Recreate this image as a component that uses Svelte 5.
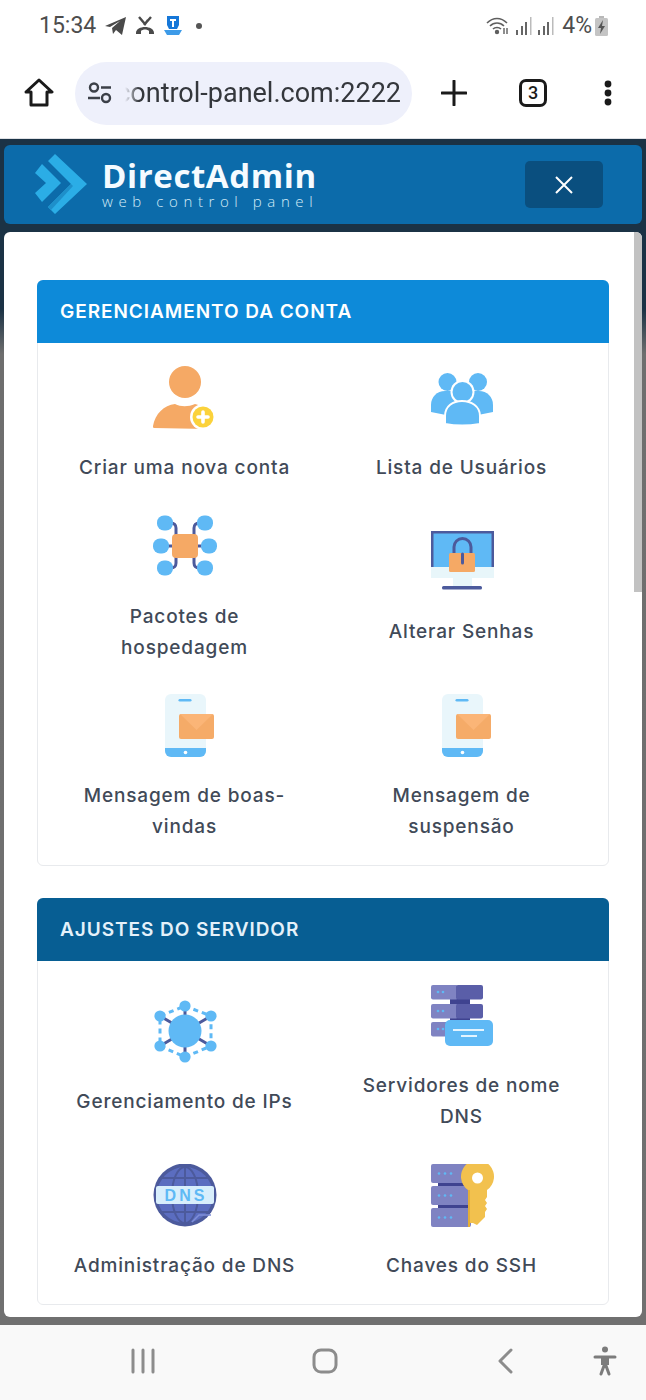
<script>
  const sections = [
    { title: 'GERENCIAMENTO DA CONTA', tone: 'bright', items: [
      { icon: 'user', label: 'Criar uma nova conta' },
      { icon: 'users', label: 'Lista de Usuários' },
      { icon: 'nodes', label: 'Pacotes de hospedagem' },
      { icon: 'monitor', label: 'Alterar Senhas' },
      { icon: 'phone', label: 'Mensagem de boas-vindas' },
      { icon: 'phone', label: 'Mensagem de suspensão' }
    ]},
    { title: 'AJUSTES DO SERVIDOR', tone: 'deep', items: [
      { icon: 'ip', label: 'Gerenciamento de IPs' },
      { icon: 'servers', label: 'Servidores de nome DNS' },
      { icon: 'globe', label: 'Administração de DNS' },
      { icon: 'key', label: 'Chaves do SSH' }
    ]}
  ];
  const blue = '#5fb9f5', navy = '#4c5a9c', orange = '#f5a965', lilac = '#7f83c2', violet = '#5a5ea8';
  const ipNodes = [[32,6],[58,16],[58,46],[32,57],[7,46],[7,16]];
  const tree = [[12,8],[52,8],[8,31],[56,31],[12,53],[52,53]];
</script>

<div class="screen">
  <div class="status">
    <span class="time">15:34</span>
    <svg class="s-icon" width="22" height="20" viewBox="0 0 22 20"><path d="M0 10 21 1 17 19 11 14 8 18 7 12 15 5 5 11z" fill="#4a4a4a"/></svg>
    <svg class="s-icon" width="20" height="20" viewBox="0 0 20 20" fill="none" stroke="#4a4a4a"><path d="M4 1 10 8 13 4M16 1 9 9" stroke-width="2.4"/><path d="M1 17c0-8 18-8 18 0v1h-5v-3c-2-2-6-2-8 0v3H1z" fill="#4a4a4a" stroke="none"/></svg>
    <svg class="s-icon" width="20" height="22" viewBox="0 0 20 22"><path d="M4 1h12v9l-2 4H6l-2-4z" fill="#1677d8"/><path d="M7 4h6v2h-2v6H9V6H7z" fill="#fff"/><path d="M1 15h18l-3 5H4z" fill="#3d9be8"/></svg>
    <span class="dot"></span>
    <span class="spacer"></span>
    <svg width="24" height="20" viewBox="0 0 24 20" fill="none" stroke="#5f5f5f" stroke-width="1.6"><path d="M1 7c6-6 14-6 20 0M4 10c4-4 10-4 14 0M7 13c2-2 6-2 8 0"/><circle cx="11" cy="16" r="1.4" fill="#5f5f5f"/><path d="M18 12v6M21 12v6" stroke-width="1.4"/></svg>
    <svg class="bars" width="17" height="20" viewBox="0 0 17 20"><rect x="1" y="14" width="2" height="5" fill="#666"/><rect x="6" y="10" width="2" height="9" fill="#666"/><rect x="10" y="6" width="2" height="13" fill="#666"/><rect x="15" y="1" width="1.5" height="18" fill="#bbb"/></svg>
    <svg class="bars" width="17" height="20" viewBox="0 0 17 20"><rect x="1" y="14" width="2" height="5" fill="#666"/><rect x="6" y="10" width="2" height="9" fill="#666"/><rect x="10" y="6" width="2" height="13" fill="#666"/><rect x="15" y="1" width="1.5" height="18" fill="#bbb"/></svg>
    <span class="pct">4%</span>
    <svg width="13" height="20" viewBox="0 0 13 20"><rect x="4" y="0" width="5" height="2" fill="#b8b8b8"/><rect x="0" y="2" width="13" height="18" rx="1.5" fill="#c4c4c4"/><path d="M8 4 3 12h3l-1 6 5-8H7z" fill="#555"/></svg>
  </div>

  <div class="toolbar">
    <svg class="home" width="30" height="30" viewBox="0 0 30 30" fill="none" stroke="#1a1a1a" stroke-width="3" stroke-linejoin="round"><path d="M2 14 15 2l13 12h-5v13H7V14z"/></svg>
    <div class="pill">
      <svg width="26" height="22" viewBox="0 0 26 22" fill="none" stroke="#3c4048" stroke-width="2.4"><circle cx="7" cy="5.5" r="4"/><path d="M14 5.500h10M1 16h12"/><circle cx="19" cy="16" r="4"/></svg>
      <span class="url">control-panel.com:2222</span>
    </div>
    <svg class="plus" width="26" height="26" viewBox="0 0 26 26" stroke="#1a1a1a" stroke-width="3" stroke-linecap="round"><path d="M13 1v24M1 13h24"/></svg>
    <div class="tabs">3</div>
    <svg class="more" width="8" height="26" viewBox="0 0 8 26" fill="#1a1a1a"><circle cx="4" cy="4" r="3.4"/><circle cx="4" cy="13" r="3.4"/><circle cx="4" cy="22" r="3.4"/></svg>
  </div>

  <main class="page">
    <header class="brand">
      <svg class="logo" width="54" height="62" viewBox="0 0 54 62">
        <path d="M20 1 52 31 20 61 13 54 36 31 13 8z" fill="#2bade6"/>
        <path d="M7 11 26 30 7 49 0 40 11 30 0 20z" fill="#2bade6"/>
        <path d="M36 31 13 54 16 57 38 33z" fill="#1e8fca"/>
      </svg>
      <div class="wordmark">
        <div class="name">DirectAdmin</div>
        <div class="tag">web control panel</div>
      </div>
      <button class="close" aria-label="Fechar">
        <svg width="18" height="18" viewBox="0 0 18 18" stroke="#fff" stroke-width="2"><path d="M1 1l16 16M17 1 1 17"/></svg>
      </button>
    </header>

    <section class="panel">
      <div class="thumb"></div>
      {#each sections as s}
        <article class="card">
          <h2 class="card-head {s.tone}">{s.title}</h2>
          <div class="grid">
            {#each s.items as it}
              <div class="item">
                <svg width="64" height="64" viewBox="0 0 64 64">
                  {#if it.icon === 'user'}
                    <circle cx="32" cy="16" r="16" fill={orange}/>
                    <path d="M1 62c-1 0-1-1-1-2 2-12 11-21 22-22 6 3 13 3 20 0 9 2 15 7 19 16l-7 9z" fill={orange}/>
                    <circle cx="50" cy="51" r="13" fill="#fff"/>
                    <circle cx="50" cy="51" r="10.5" fill="#fbd23b"/>
                    <path d="M50 46v10M45 51h10" stroke="#fff" stroke-width="3.6" stroke-linecap="round"/>
                  {:else if it.icon === 'users'}
                    <circle cx="17.5" cy="16" r="9" fill={blue}/>
                    <circle cx="48" cy="16" r="9" fill={blue}/>
                    <path d="M1 46v-7c0-8 6-14 14-14h7l8 10-14 14z" fill={blue}/>
                    <path d="M63 46v-7c0-8-6-14-14-14h-7l-8 10 14 14z" fill={blue}/>
                    <circle cx="32.5" cy="26" r="12" fill="#fff"/>
                    <circle cx="32.5" cy="26" r="10" fill={blue}/>
                    <path d="M15 58V50c0-10 8-15 17-15s18 5 18 15v8c-12 2-24 2-35 0z" fill={blue} stroke="#fff" stroke-width="2"/>
                  {:else if it.icon === 'nodes'}
                    <g fill="none" stroke={navy} stroke-width="3">
                      <path d="M12 8h6c3 0 5 2 5 5v8M52 8h-6c-3 0-5 2-5 5v8M12 53h6c3 0 5-2 5-5v-8M52 53h-6c-3 0-5-2-5-5v-8M8 31h48"/>
                    </g>
                    {#each tree as n}<rect x={n[0]-8} y={n[1]-7.5} width="16" height="15" rx="7" fill={blue}/>{/each}
                    <rect x="19" y="19" width="26" height="24" rx="4" fill={orange}/>
                  {:else if it.icon === 'monitor'}
                    <rect x="1" y="1" width="63" height="37" fill={navy}/>
                    <rect x="3.5" y="3.5" width="58" height="34" fill={blue}/>
                    <rect x="1" y="37" width="63" height="11" fill="#e8f6fa"/>
                    <rect x="23" y="48" width="19" height="8" fill="#e8f6fa"/>
                    <rect x="12" y="56" width="40" height="3.4" rx="1.5" fill={navy}/>
                    <path d="M24 24v-7a8.500 8.500 0 0 1 17 0v7" fill="none" stroke={navy} stroke-width="3"/>
                    <rect x="19" y="23" width="26" height="19" rx="1.500" fill={orange}/>
                    <path d="M32.500 24v9" stroke={navy} stroke-width="3" stroke-linecap="round"/>
                  {:else if it.icon === 'phone'}
                    <rect x="12" y="0" width="41" height="63" rx="6" fill="#e9f6fb"/>
                    <path d="M12 54h41v3a6 6 0 0 1-6 6H18a6 6 0 0 1-6-6z" fill={blue}/>
                    <rect x="25.500" y="5" width="13" height="2.600" rx="1.300" fill={blue}/>
                    <circle cx="32.500" cy="58.500" r="1.800" fill="#fff"/>
                    <rect x="26" y="20" width="35" height="25" rx="2" fill="#f5ab68"/>
                    <path d="M27 20h33L43.500 36z" fill="#fbb577"/>
                  {:else if it.icon === 'ip'}
                    <path d="M32 6 58 16v30L32 57 7 46V16z" fill="none" stroke={blue} stroke-width="3" stroke-dasharray="5 4"/>
                    <path d="M32 6v50M7 16l51 30M58 16 7 46" stroke={navy} stroke-width="3"/>
                    <circle cx="32" cy="31" r="16.500" fill={blue}/>
                    {#each ipNodes as n}<circle cx={n[0]} cy={n[1]} r="5.600" fill={blue}/>{/each}
                  {:else if it.icon === 'servers'}
                    <rect x="20" y="14" width="20" height="8" fill="#3f4390"/>
                    <rect x="20" y="32" width="20" height="8" fill="#3f4390"/>
                    {#each [1,20,38] as y}
                      <rect x="1" y={y} width="27" height="14.500" rx="2" fill={lilac}/>
                      <rect x="26" y={y} width="27" height="14.500" rx="2" fill={violet}/>
                      <circle cx="8" cy={y+7} r="1.300" fill={blue}/>
                      <circle cx="13" cy={y+7} r="1.300" fill={blue}/>
                    {/each}
                    <rect x="15" y="36" width="48" height="26" rx="5" fill={blue}/>
                    <path d="M23 46h31M31 52h16" stroke="#e3f4ff" stroke-width="2.200"/>
                  {:else if it.icon === 'globe'}
                    <circle cx="32" cy="31" r="31.500" fill={navy}/>
                    <circle cx="32" cy="31" r="28" fill="#5b6dc0"/>
                    <g fill="none" stroke={navy} stroke-width="2">
                      <ellipse cx="32" cy="31" rx="13" ry="28"/>
                      <path d="M32 3v56M6 14h52M6 48h52"/>
                    </g>
                    <rect x="3" y="22" width="58" height="18" rx="2" fill="#d8eefc"/>
                    <text x="33" y="37" text-anchor="middle" class="dns">DNS</text>
                    <path d="M39 58 46 51h12" fill="none" stroke="#7f8fd8" stroke-width="1.500"/>
                  {:else if it.icon === 'key'}
                    {#each [0,22,44] as y}
                      <rect x="1" y={y} width="40" height="19" rx="2" fill={lilac}/>
                      <circle cx="9" cy={y+9.500} r="1.300" fill={blue}/>
                      <circle cx="15" cy={y+9.500} r="1.300" fill={blue}/>
                      <circle cx="21" cy={y+9.500} r="1.300" fill={blue}/>
                    {/each}
                    <rect x="8" y="19" width="30" height="3" fill="#3f4390"/>
                    <rect x="8" y="41" width="30" height="3" fill="#3f4390"/>
                    <path d="M38 26a16.500 16.500 0 1 1 19 0v7l-2 3 2 3-2 3 2 3-2 3v5l-8 8-4-2H38z" fill="#f2c14e"/>
                    <path d="M38 26h2v37h-2z" fill="#e4ae36"/>
                    <circle cx="47.500" cy="14" r="5.500" fill="#fff"/>
                  {/if}
                </svg>
                <div class="label">{it.label}</div>
              </div>
            {/each}
          </div>
        </article>
      {/each}
    </section>
  </main>

  <nav class="nav">
    <svg class="n1" width="24" height="26" viewBox="0 0 24 26" stroke="#8c8c8c" stroke-width="3" stroke-linecap="round"><path d="M2 2v22M12 2v22M22 2v22"/></svg>
    <svg class="n2" width="26" height="26" viewBox="0 0 26 26" fill="none" stroke="#8c8c8c" stroke-width="3"><rect x="2" y="2" width="22" height="22" rx="7"/></svg>
    <svg class="n3" width="16" height="26" viewBox="0 0 16 26" fill="none" stroke="#8c8c8c" stroke-width="3" stroke-linecap="round" stroke-linejoin="round"><path d="M13 2 2 13l11 11"/></svg>
    <svg class="n4" width="24" height="30" viewBox="0 0 24 30" fill="none" stroke="#7c7c7c" stroke-width="3" stroke-linecap="round"><circle cx="12" cy="3.500" r="3" fill="#7c7c7c" stroke="none"/><path d="M2 11h20M12 11v7M12 17l-4 11M12 17l4 11"/><path d="M8 11h8v8H8z" fill="#7c7c7c" stroke="none"/></svg>
  </nav>
</div>

<style>
  :global(body) { margin: 0; background: #fff; }
  .screen {
    width: 646px;
    height: 1400px;
    display: flex;
    flex-direction: column;
    overflow: hidden;
    font-family: Inter, "Noto Sans", sans-serif;
  }
  .status {
    height: 53px;
    flex: none;
    box-sizing: border-box;
    padding: 0 38px 2px 39px;
    display: flex;
    align-items: center;
    color: #4d4d4d;
    font-family: Roboto, sans-serif;
  }
  .time { font-size: 23px; margin-right: 9px; }
  .s-icon { margin-right: 8px; }
  .dot { width: 6px; height: 6px; border-radius: 50%; background: #555; margin-left: 5px; }
  .spacer { flex: 1; }
  .bars { margin-left: 5px; }
  .pct { font-size: 23px; margin: 0 3px 0 8px; }

  .toolbar {
    height: 86px;
    flex: none;
    box-sizing: border-box;
    border-bottom: 1px solid #dfe1e5;
    padding: 9px 34px 14px 24px;
    display: flex;
    align-items: center;
    background: #fff;
  }
  .home { margin-right: 21px; flex: none; }
  .pill {
    width: 337px;
    height: 63px;
    box-sizing: border-box;
    border-radius: 32px;
    background: #eef0fb;
    display: flex;
    align-items: center;
    padding: 0 11px 0 12px;
    gap: 12px;
    flex: none;
  }
  .pill svg { flex: none; }
  .url {
    flex: 1;
    min-width: 0;
    height: 34px;
    line-height: 34px;
    overflow: hidden;
    white-space: nowrap;
    display: flex;
    justify-content: flex-end;
    font-family: Roboto, sans-serif;
    font-size: 27px;
    color: #34373c;
    -webkit-mask-image: linear-gradient(to right, transparent 0, #000 14px);
    mask-image: linear-gradient(to right, transparent 0, #000 14px);
  }
  .plus { margin-left: 29px; flex: none; }
  .tabs {
    margin-left: 52px;
    width: 28px;
    height: 28px;
    box-sizing: border-box;
    flex: none;
    border: 3px solid #1a1a1a;
    border-radius: 7px;
    font: 500 18px/22px Roboto, sans-serif;
    text-align: center;
    color: #1a1a1a;
  }
  .more { margin-left: 57px; flex: none; }

  .page {
    flex: 1;
    min-height: 0;
    box-sizing: border-box;
    padding: 6px 4px 8px;
    display: flex;
    flex-direction: column;
    gap: 8px;
    background: linear-gradient(to bottom, #1b3245 0, #1b3245 170px, #6e6e6e 215px, #707070 100%);
  }
  .brand {
    height: 79px;
    flex: none;
    box-sizing: border-box;
    border-radius: 6px;
    background: #0c6baa;
    display: flex;
    align-items: center;
    padding: 0 39px 0 31px;
  }
  .logo { flex: none; margin: -2px 13px 0 0; }
  .wordmark { flex: 1; margin-top: -1px; }
  .name {
    font-family: "Open Sans", sans-serif;
    font-weight: 700;
    font-size: 33px;
    line-height: 34px;
    letter-spacing: 0.6px;
    color: #f5fbff;
  }
  .tag {
    font-family: "Open Sans", sans-serif;
    font-weight: 300;
    font-size: 15px;
    line-height: 17px;
    letter-spacing: 5.6px;
    color: #d5ebf7;
  }
  .close {
    width: 78px;
    height: 47px;
    padding: 0;
    border: 0;
    border-radius: 5px;
    background: #0a4f7f;
    display: flex;
    align-items: center;
    justify-content: center;
  }

  .panel {
    flex: 1;
    min-height: 0;
    position: relative;
    overflow: hidden;
    box-sizing: border-box;
    border-radius: 6px;
    background: #fff;
    padding: 48px 33px 0;
  }
  .thumb {
    position: absolute;
    top: 0;
    right: 0;
    width: 8px;
    height: 360px;
    background: #c2c2c2;
  }
  .card {
    border: 1px solid #e8eaed;
    border-radius: 6px;
    margin-bottom: 32px;
  }
  .card-head {
    margin: -1px -1px 0;
    height: 63px;
    box-sizing: border-box;
    padding: 0 23px;
    display: flex;
    align-items: center;
    border-radius: 6px 6px 0 0;
    font-size: 19px;
    font-weight: 600;
    letter-spacing: 0.95px;
  }
  .bright { background: #0d8ad9; color: #fff; }
  .deep { background: #075e93; color: #e4f1fa; }
  .grid {
    padding: 23px 8px 23px;
    display: grid;
    grid-template-columns: 1fr 1fr;
    row-gap: 31.5px;
    align-items: center;
  }
  .item {
    display: flex;
    flex-direction: column;
    align-items: center;
    gap: 22px;
    padding: 0 24px;
  }
  .item svg { display: block; flex: none; }
  .label {
    text-align: center;
    font-size: 19px;
    line-height: 31px;
    font-weight: 450;
    letter-spacing: 0.85px;
    color: #414a58;
  }
  .dns {
    font-family: "Liberation Sans", sans-serif;
    font-weight: 700;
    font-size: 16px;
    letter-spacing: 3px;
    fill: #5fb9f5;
  }

  .nav {
    height: 75px;
    flex: none;
    background: #f9f9f9;
    display: flex;
    align-items: center;
    box-sizing: border-box;
    padding-bottom: 4px;
  }
  .n1 { margin-left: 131px; }
  .n2 { margin-left: 157px; }
  .n3 { margin-left: 160px; }
  .n4 { margin-left: 79px; }
</style>
